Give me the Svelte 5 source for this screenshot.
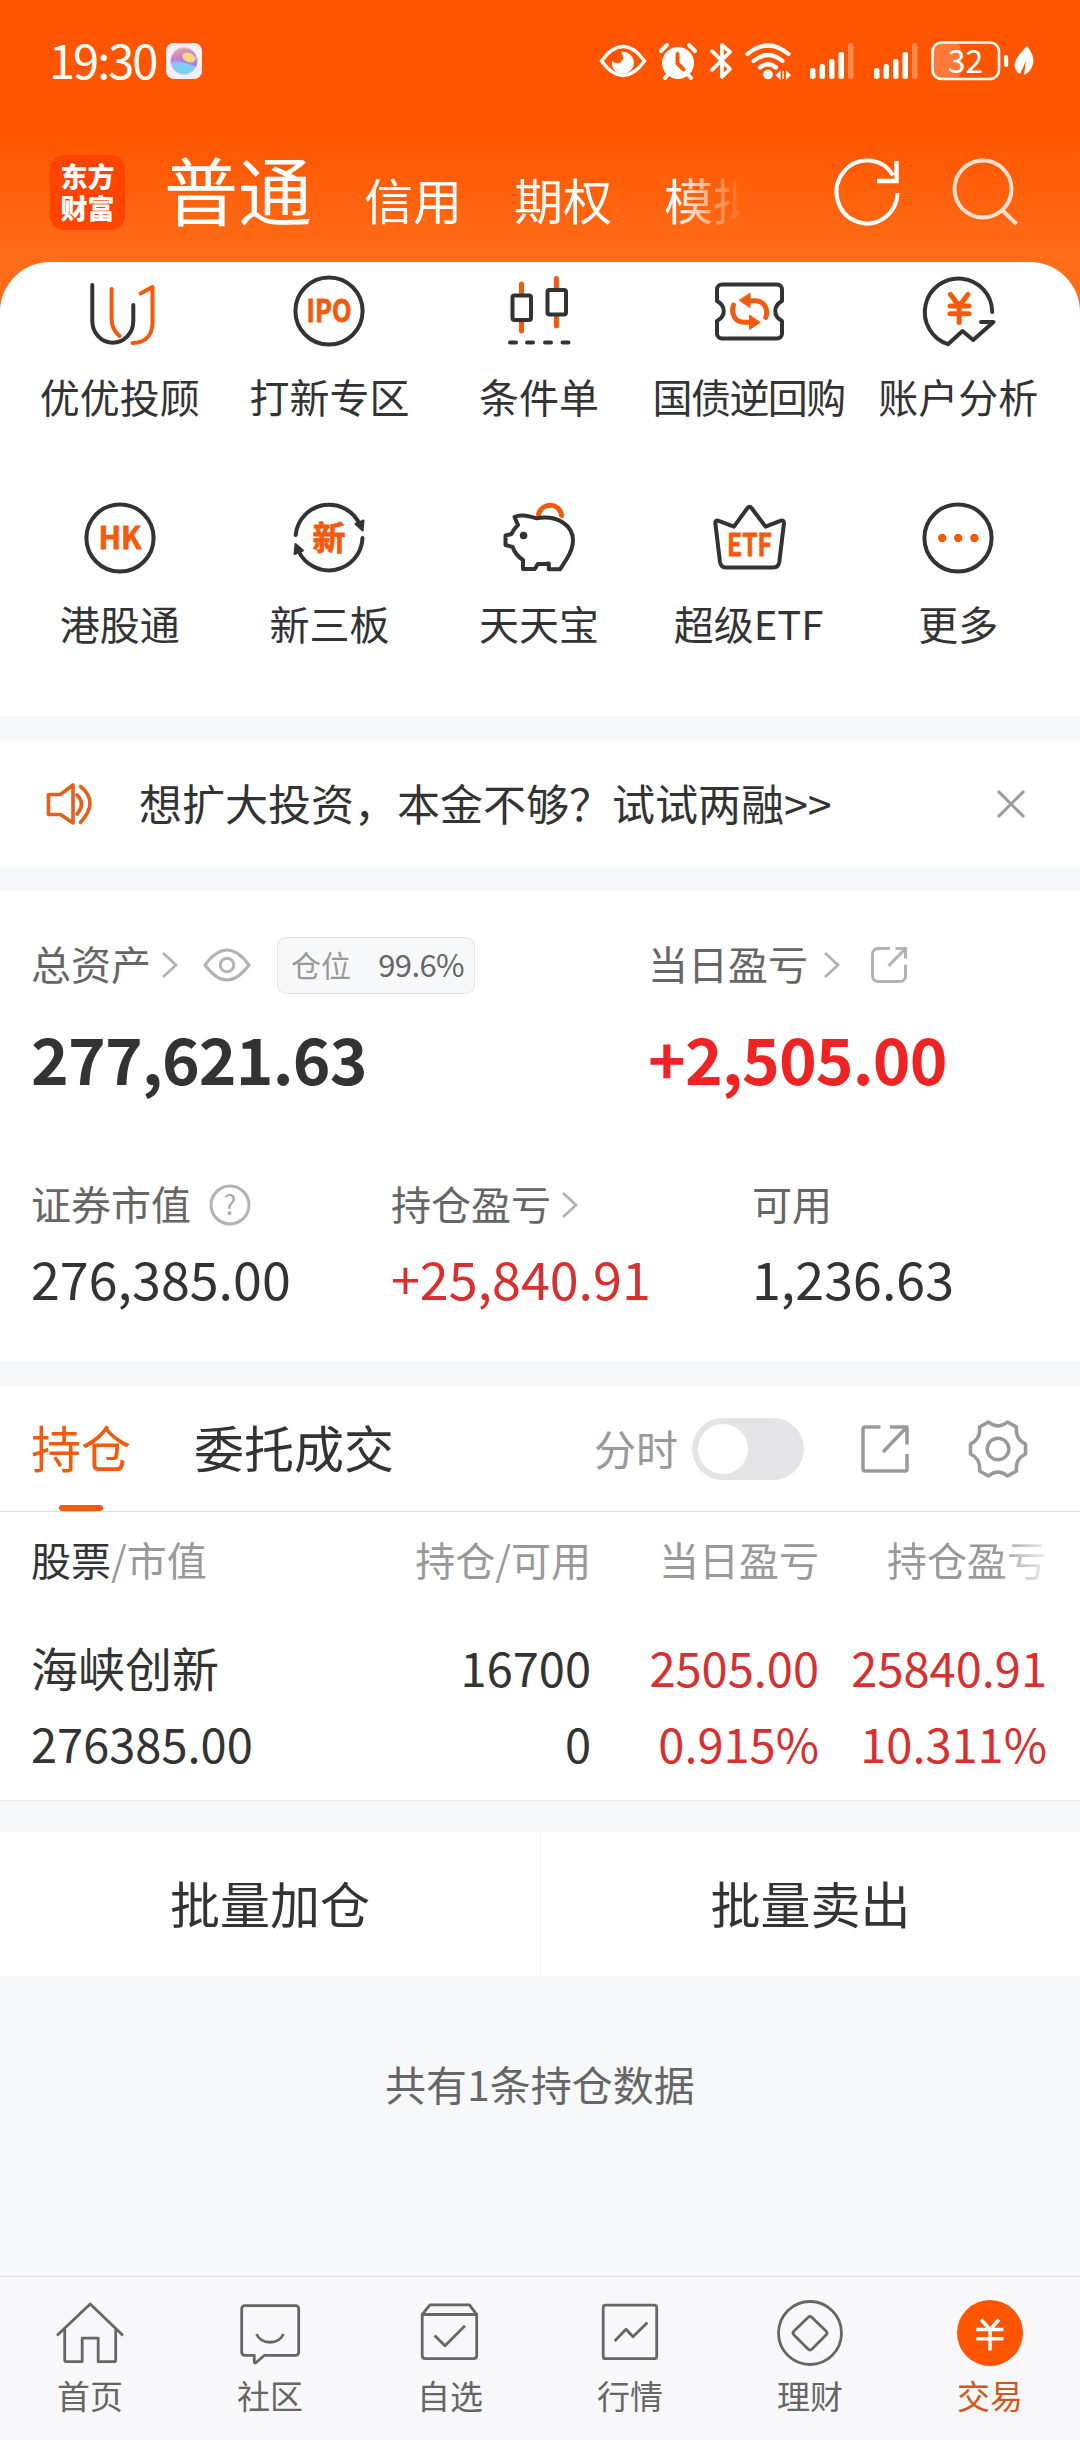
<script>
	const tabs = ['信用', '期权', '模拟'];
	const menu = [
		['advisor', '优优投顾'],
		['ipo', '打新专区'],
		['candles', '条件单'],
		['ticket', '国债逆回购'],
		['analysis', '账户分析'],
		['hk', '港股通'],
		['neeq', '新三板'],
		['pig', '天天宝'],
		['etf', '超级ETF'],
		['more', '更多']
	];
	const nav = [
		['home', '首页'],
		['chat', '社区'],
		['favorites', '自选'],
		['market', '行情'],
		['wealth', '理财'],
		['trade', '交易']
	];
	const positions = [
		{
			name: '海峡创新',
			value: '276385.00',
			amount: '16700',
			available: '0',
			day: '2505.00',
			dayRate: '0.915%',
			total: '25840.91',
			totalRate: '10.311%'
		}
	];
	let intraday = $state(false);
</script>

{#snippet signal()}
	<svg class="signal" viewBox="0 0 45 37" width="45" height="37">
		<g fill="#fff">
			<rect x="0" y="25" width="5.5" height="11" rx="2.5" />
			<rect x="9.5" y="21" width="5.5" height="15" rx="2.5" />
			<rect x="19" y="16" width="5.5" height="20" rx="2.5" />
			<rect x="28.5" y="9" width="5.5" height="27" rx="2.5" />
			<rect x="38" y="0" width="5.5" height="36" rx="2.5" opacity=".3" />
		</g>
	</svg>
{/snippet}

{#snippet chevron()}
	<svg class="chevron" viewBox="0 0 18 28" width="18" height="28">
		<path d="M2 2l13 12L2 26" fill="none" stroke="#b3b3b3" stroke-width="2.8" />
	</svg>
{/snippet}

{#snippet menuIcon(name)}
	<svg class="menu-icon" viewBox="0 0 72 72" width="72" height="72">
		{#if name === 'advisor'}
			<path d="M8.3 10v36a20.5 21.7 0 0 0 41 0V30" />
			<path class="hot" d="M27.6 14v30c0 8 3 13 8 17" />
			<path class="hot" d="M48.5 68c13 0 20-8 20-21V12l-12 6.5" />
		{:else if name === 'ipo'}
			<circle cx="36" cy="36" r="33.6" />
			<text x="36" y="47.4" textLength="45" lengthAdjust="spacingAndGlyphs" font-size="31">IPO</text>
		{:else if name === 'candles'}
			<path class="hot thick" d="M18.5 9v10M18.5 46v10M53.4 3.5v10M53.4 41v10" />
			<rect x="9.5" y="20.5" width="18.5" height="24.5" rx="2" />
			<rect x="44.5" y="15" width="18.5" height="24.5" rx="2" />
			<path d="M7 67.5h6M24 67.5h6M42 67.5h6M59.5 67.5h6" />
		{:else if name === 'ticket'}
			<path d="M9 9.5h55a5 5 0 0 1 5 5v11.500c-9 5-9 15 0 20v12.500a5 5 0 0 1-5 5H9a5 5 0 0 1-5-5V46c9-5 9-15 0-20V14.500a5 5 0 0 1 5-5z" />
			<path class="hot thick" d="M20.5 30c-3 9 2 17 10 17.300h8M52.800 42.500c3-9-2-16.500-10.500-16.800h-7" />
			<path class="solid" d="M37 18.500v14l-10.500-7zM36.500 40.500v14l10.500-7z" />
		{:else if name === 'analysis'}
			<path d="M70.2 37A33.7 33.7 0 1 0 26 69.200L40.500 56l10.700 9L71.500 47H59" />
			<path class="hot" stroke-width="5" d="M28.500 19.500L37.200 31l8.700-11.500M37.200 31v16.500M28 31h19M28 38.800h19" />
		{:else if name === 'hk'}
			<circle cx="36" cy="36" r="33.6" />
			<text x="36" y="47.4" textLength="43" lengthAdjust="spacingAndGlyphs" font-size="31">HK</text>
		{:else if name === 'neeq'}
			<path d="M2.700 33A33.600 33.600 0 0 1 67 23M69.500 36A33.600 33.600 0 0 1 5.500 49" />
			<path class="tip" d="M62.500 22l8-3.500-.8 10zM2.500 42l-1 10 8.500-3.500z" />
			<text x="36" y="48" font-size="33">新</text>
		{:else if name === 'pig'}
			<path class="hot thick" d="M35.500 12.500C39 0 56 0 58.700 13.500" />
			<path d="M11.500 15c6-3 13-1 22 1.200C56 13 70 24 70 38.500c0 8-3 13-6 18L57 67.300H45.800V61.500q-6 .8-11 .5l-3 5H20v-9C14 54 11 49 9.600 45L2.500 43V33.500l6-1.500q2-5 6.500-9z" />
			<circle class="tip" cx="20.6" cy="33.5" r="2.8" />
		{:else if name === 'etf'}
			<path d="M5 18.600l15.900 6L34.500 6q2-2.500 4 0l14 18.600 15.500-6q3-.5 3 2.500L66.300 60q-.8 5.500-6 5.500H13q-5.200 0-6-5.500L2.300 21q0-3 2.700-2.400z" />
			<text x="36.5" y="54.3" textLength="45" lengthAdjust="spacingAndGlyphs" font-size="31">ETF</text>
		{:else}
			<circle cx="36" cy="36" r="33.6" />
			<g class="solid">
				<circle cx="20.2" cy="36" r="2.2" />
				<circle cx="36.2" cy="36" r="2.2" />
				<circle cx="52.4" cy="36" r="2.2" />
			</g>
		{/if}
	</svg>
{/snippet}

{#snippet navIcon(name)}
	<svg class="nav-icon" viewBox="0 0 72 72" width="72" height="72">
		{#if name === 'home'}
			<path d="M3 38.500L36.200 7 69 38.500M10.700 32v30.700q0 2 2 2h15.500V41.200h16v23.500h15.500q2 0 2-2V32" />
		{:else if name === 'chat'}
			<path d="M10.700 8.700h51a3 3 0 0 1 3 3v43.600a3 3 0 0 1-3 3H30.500L21.500 66l-1.200-.5v-7.200h-9.600a3 3 0 0 1-3-3V11.700a3 3 0 0 1 3-3z" />
			<path d="M22.500 37c5 11 22 11 27 0" />
		{:else if name === 'favorites'}
			<path d="M8.200 17.500h54.500v41q0 3.200-3.200 3.200H11.400q-3.200 0-3.200-3.200zM8.200 17.500L16 7.900h39.400l7.300 9.600M20.600 38.500L31 48.800l20-20" />
		{:else if name === 'market'}
			<rect x="9.2" y="8.2" width="53.5" height="53.5" rx="2.5" />
			<path d="M20.700 44L32 32.300l7 7.400 14.400-14.200" />
		{:else if name === 'wealth'}
			<circle cx="36" cy="36" r="31.5" />
			<path d="M34 20.500q2-2 4 0l14 13.500q2 2 0 4l-14 14q-2 2-4 0L20 38q-2-2 0-4z" />
		{:else}
			<circle class="coin" cx="36" cy="36" r="33" />
			<path class="yen" d="M27 22.500l9 10 9-10M36 32.500v21M22.300 32.500h27.200M22.300 41.700h27.200" />
		{/if}
	</svg>
{/snippet}

<main>
	<div class="top">
		<div class="status">
			<span class="clock">19:30</span>
			<svg class="orb" viewBox="0 0 36 36" width="36" height="36">
				<defs>
					<linearGradient id="orb" x1="0" y1="0" x2="0.3" y2="1">
						<stop offset="0" stop-color="#f5b76e" />
						<stop offset=".45" stop-color="#c47be0" />
						<stop offset=".6" stop-color="#8cc8f4" />
						<stop offset="1" stop-color="#72d4f0" />
					</linearGradient>
				</defs>
				<rect width="36" height="36" rx="8" fill="#f4f1f6" />
				<circle cx="18" cy="18" r="13.5" fill="url(#orb)" stroke="#e4cbe6" />
				<path d="M10 18q10 1 20 6 3-8-3-14-10 2-17 8z" fill="#b57be8" />
				<ellipse cx="23" cy="14.5" rx="7" ry="4.5" fill="#f5d77c" transform="rotate(20 23 14)" />
			</svg>
			<div class="indicators">
				<svg class="s-eye" viewBox="0 0 48 34" width="48" height="34">
					<path d="M2.500 17Q13 2.500 24 2.500T45.500 17Q35 31.500 24 31.500T2.500 17z" fill="none" stroke="#fff" stroke-width="3.5" />
					<path d="M22 8a11 11 0 1 1-9 9q5 4 9 1 4-4 0-10z" fill="#fff" />
				</svg>
				<svg class="s-alarm" viewBox="0 0 38 37" width="38" height="37">
					<path d="M6 35l5-6M32 35l-5-6M2 8l6-6M36 8l-6-6" stroke="#fff" stroke-width="4" stroke-linecap="round" />
					<circle cx="19" cy="20" r="16" fill="#fff" />
					<path d="M18.500 11v9.500l6 6" fill="none" stroke="#ff5500" stroke-width="4" stroke-linecap="round" />
				</svg>
				<svg class="s-bt" viewBox="0 0 24 38" width="24" height="38">
					<path d="M3 9l18 18-8 8V3l8 7L3 28" fill="none" stroke="#fff" stroke-width="3.8" stroke-linejoin="round" stroke-linecap="round" />
				</svg>
				<svg class="s-wifi" viewBox="0 0 46 37" width="46" height="37">
					<g fill="none" stroke="#fff" stroke-width="4.2" stroke-linecap="round">
						<path d="M2.500 11q20.500-17 41 0M8.500 18q14.500-12 29 0M15 24.500q8-6.500 16 0" />
					</g>
					<circle cx="23" cy="31.5" r="4.8" fill="#fff" />
					<path d="M30.500 32l5-4.500V37zM46 32l-5-4.500V37zM37.500 28h1.500v8h-1.500z" fill="#fff" />
				</svg>
				{@render signal()}
				{@render signal()}
				<svg class="s-battery" viewBox="0 0 78 40" width="78" height="40">
					<rect x="2" y="2" width="28" height="36" rx="7" fill="#fff" opacity=".22" />
					<rect x="1.5" y="1.5" width="66.5" height="36.5" rx="9" fill="none" stroke="#fff" stroke-width="2.6" />
					<rect x="73" y="14" width="4.2" height="12" rx="2" fill="#fff" />
					<text x="34.5" y="31.5" text-anchor="middle" font-size="32" fill="#fff">32</text>
				</svg>
				<svg class="s-leaf" viewBox="0 0 20 30" width="20" height="30">
					<path d="M13 0q8 10 6 18-2 8-9 11l2-14-6 13Q-1 24 1 16q2-6 12-16z" fill="#fff" />
				</svg>
			</div>
		</div>

		<header>
			<div class="logo"><span>东方</span><span>财富</span></div>
			<nav class="accounts">
				<span class="current">普通</span>
				{#each tabs as tab}
					<span>{tab}</span>
				{/each}
			</nav>
			<svg class="refresh" viewBox="0 0 66 68" width="66" height="68">
				<path d="M62.500 35A30.500 31.500 0 1 1 58 17.500" />
				<path d="M61.500 3v20H42" stroke-width="4.5" />
			</svg>
			<svg class="search" viewBox="0 0 68 68" width="68" height="68">
				<circle cx="31" cy="31" r="28.5" />
				<path d="M50 52l14.500 14" />
			</svg>
		</header>

		<section class="menu">
			{#each menu as [icon, label]}
				<a href="#{icon}" class:long={icon === 'ticket'}>
					{@render menuIcon(icon)}
					<span>{label}</span>
				</a>
			{/each}
		</section>
	</div>

	<section class="notice">
		<svg viewBox="0 0 50 44" width="50" height="44" class="speaker">
			<path d="M2.500 12.500h12L27 3v38L14.500 32.500h-12zM31 13q9 9 0 19M34.500 4.500q19 15 0 36" />
		</svg>
		<p>想扩大投资，本金不够？试试两融&gt;&gt;</p>
		<svg viewBox="0 0 30 30" width="30" height="30" class="close">
			<path d="M2 2l26 26M28 2L2 28" />
		</svg>
	</section>

	<section class="assets">
		<div class="totals">
			<div>
				<div class="label">
					<span class="title">总资产</span>
					{@render chevron()}
					<svg class="eye" viewBox="0 0 48 34" width="48" height="34">
						<path d="M2 17Q13 2 24 2t22 15Q35 32 24 32T2 17z" />
						<circle cx="24" cy="17" r="6.8" />
					</svg>
					<span class="ratio">仓位 <b>99.6%</b></span>
				</div>
				<strong class="num">277,621.63</strong>
			</div>
			<div>
				<div class="label">
					<span class="title">当日盈亏</span>
					<span class="wide">{@render chevron()}</span>
					<svg class="share" viewBox="0 0 38 38" width="38" height="38">
						<path d="M20 2.500H8a5.500 5.500 0 0 0-5.500 5.500v22A5.500 5.500 0 0 0 8 35.500h22a5.500 5.500 0 0 0 5.500-5.500V18.500M25.500 2.500h10v10M35 3L18.500 20" />
					</svg>
				</div>
				<strong class="num rise">+2,505.00</strong>
			</div>
		</div>
		<div class="details">
			<div>
				<div class="label">
					<span class="title">证券市值</span>
					<svg class="help" viewBox="0 0 42 42" width="42" height="42">
						<circle cx="21" cy="21" r="19" />
						<text x="21" y="30.5" text-anchor="middle" font-size="27">?</text>
					</svg>
				</div>
				<div class="num">276,385.00</div>
			</div>
			<div>
				<div class="label">
					<span class="title">持仓盈亏</span>
					{@render chevron()}
				</div>
				<div class="num rise">+25,840.91</div>
			</div>
			<div>
				<div class="label"><span class="title">可用</span></div>
				<div class="num">1,236.63</div>
			</div>
		</div>
	</section>

	<section class="positions">
		<div class="toolbar">
			<span class="tab active">持仓</span>
			<span class="tab">委托成交</span>
			<span class="switch-label">分时</span>
			<button class="switch" class:on={intraday} onclick={() => (intraday = !intraday)} aria-label="分时"></button>
			<svg class="export" viewBox="0 0 48 50" width="48" height="50">
				<path d="M19.500 3H4a2 2 0 0 0-2 2v40a2 2 0 0 0 2 2h40a2 2 0 0 0 2-2V30M29 3h17v17.500M45 4L22 28" />
			</svg>
			<svg class="gear" viewBox="0 0 58 58" width="58" height="58">
				<path d="M19.500 2q9.500 8 19 0l9 5q-1.500 12 9 17v10q-10.500 5-9 17l-9 5q-9.500-8-19 0l-9-5q1.500-12-9-17V24q10.500-5 9-17z" />
				<circle cx="29" cy="29" r="10.8" />
			</svg>
		</div>

		<div class="row head">
			<span><b>股票</b>/市值</span>
			<span>持仓/可用</span>
			<span>当日盈亏</span>
			<span class="fade">持仓盈亏</span>
		</div>
		{#each positions as p}
			<div class="row stock">
				<span class="name">{p.name}</span>
				<span>{p.amount}</span>
				<span class="rise">{p.day}</span>
				<span class="rise">{p.total}</span>
			</div>
			<div class="row stock last">
				<span>{p.value}</span>
				<span>{p.available}</span>
				<span class="rise">{p.dayRate}</span>
				<span class="rise">{p.totalRate}</span>
			</div>
		{/each}
	</section>

	<div class="batch">
		<span>批量加仓</span>
		<span>批量卖出</span>
	</div>

	<p class="count">共有{positions.length}条持仓数据</p>

	<nav class="bottom">
		{#each nav as [icon, label]}
			<a href="#{icon}" class:active={icon === 'trade'}>
				{@render navIcon(icon)}
				<span>{label}</span>
			</a>
		{/each}
	</nav>
</main>

<style>
	:global(body) {
		margin: 0;
		background: #f7f8fa;
	}

	main {
		display: flex;
		flex-direction: column;
		width: 1080px;
		height: 2440px;
		overflow: hidden;
		font-family: 'Noto Sans CJK SC', sans-serif;
		font-weight: 400;
		color: #333;
		background: #f7f8fa;
	}

	svg {
		display: block;
		flex: none;
		overflow: visible;
	}

	a {
		color: inherit;
		text-decoration: none;
	}

	p {
		margin: 0;
	}

	.rise {
		color: #d7302f;
	}

	/* status bar and header */
	.top {
		background: linear-gradient(#ff5500 135px, #ff6d18 255px);
	}

	.status {
		display: flex;
		align-items: center;
		height: 122px;
		box-sizing: border-box;
		padding: 0 46px 0 49px;
		color: #fff;
	}

	.clock {
		width: 117px;
		padding-bottom: 5px;
		font-size: 47px;
		line-height: 60px;
		letter-spacing: -2px;
		white-space: nowrap;
	}

	.indicators {
		display: flex;
		align-items: center;
		margin-left: auto;
	}

	.s-alarm,
	.s-bt,
	.s-wifi,
	.s-battery {
		margin-left: 12px;
	}

	.signal {
		margin-left: 19px;
	}

	.s-leaf {
		margin-left: 5px;
	}

	header {
		display: flex;
		align-items: center;
		height: 140px;
		padding: 0 60px 0 50px;
		color: #fff;
	}

	.logo {
		display: flex;
		flex-direction: column;
		justify-content: center;
		width: 75px;
		height: 75px;
		border-radius: 14px;
		background: #ff4400;
		font-size: 27px;
		font-weight: 900;
		line-height: 32px;
		text-align: center;
	}

	.accounts {
		display: flex;
		align-items: baseline;
		gap: 52px;
		width: 576px;
		margin-left: 39px;
		padding-top: 3px;
		overflow: hidden;
		font-size: 49px;
		line-height: 110px;
		white-space: nowrap;
		-webkit-mask-image: linear-gradient(90deg, #000 510px, transparent 580px);
		mask-image: linear-gradient(90deg, #000 510px, transparent 580px);
	}

	.current {
		font-size: 74px;
	}

	.refresh,
	.search {
		fill: none;
		stroke: #fff;
		stroke-width: 4;
	}

	.refresh {
		margin-left: auto;
	}

	.search {
		margin-left: 51px;
		opacity: 0.8;
	}

	/* shortcuts */
	.menu {
		display: grid;
		grid-template-columns: repeat(5, 1fr);
		grid-auto-rows: 227px;
		box-sizing: border-box;
		height: 454px;
		padding: 13px 17px 0 15px;
		border-radius: 50px 50px 0 0;
		background: #fff;
	}

	.menu a {
		display: flex;
		flex-direction: column;
		align-items: center;
		font-size: 40px;
		line-height: 60px;
		white-space: nowrap;
	}

	.menu span {
		margin-top: 19px;
	}

	.menu .long span {
		letter-spacing: -1.6px;
	}

	.menu-icon {
		fill: none;
		stroke: #333;
		stroke-width: 4;
		stroke-linejoin: round;
		stroke-linecap: round;
	}

	.menu-icon .hot {
		stroke: #f55a0c;
	}

	.menu-icon .thick {
		stroke-width: 5;
	}

	.menu-icon .solid {
		fill: #f55a0c;
		stroke: #f55a0c;
	}

	.menu-icon path.solid {
		stroke-width: 1;
	}

	.menu-icon .tip {
		fill: #333;
		stroke-width: 2;
	}

	.menu-icon text {
		fill: #f55a0c;
		stroke: #f55a0c;
		stroke-width: 0.8;
		font-weight: 700;
		text-anchor: middle;
	}

	/* notice */
	.notice {
		display: flex;
		align-items: center;
		height: 125px;
		margin: 25px 0;
		padding: 0 54px 0 46px;
		background: #fff;
		font-size: 43px;
	}

	.notice p {
		flex: 1;
		margin-left: 43px;
		padding-bottom: 4px;
	}

	.speaker {
		fill: none;
		stroke: #e5601c;
		stroke-width: 3.6;
		stroke-linejoin: round;
		stroke-linecap: round;
	}

	.close {
		stroke: #999;
		stroke-width: 3;
	}

	/* assets */
	.assets {
		box-sizing: border-box;
		height: 470px;
		padding: 44px 0 0 31px;
		background: #fff;
	}

	.totals {
		display: grid;
		grid-template-columns: 617px 1fr;
		height: 240px;
	}

	.details {
		display: grid;
		grid-template-columns: 360px 361px 1fr;
	}

	.label {
		display: flex;
		align-items: center;
		height: 60px;
		font-size: 40px;
		line-height: 60px;
		color: #666;
	}

	.title {
		padding-bottom: 4px;
	}

	.label .chevron {
		margin-left: 10px;
	}

	.wide .chevron {
		margin-left: 15px;
	}

	.eye,
	.share,
	.help {
		fill: none;
		stroke: #b3b3b3;
		stroke-width: 3;
	}

	.eye {
		margin-left: 24px;
	}

	.share {
		margin-left: 29px;
	}

	.help {
		margin-left: 18px;
	}

	.help text {
		fill: #aaa;
		stroke: none;
	}

	.ratio {
		display: flex;
		justify-content: space-between;
		align-items: center;
		box-sizing: border-box;
		width: 198px;
		height: 57px;
		margin-left: 26px;
		padding: 0 10px 3px 13px;
		border: 1px solid #e4e4e6;
		border-radius: 9px;
		background: #f7f8fa;
		font-size: 30px;
		color: #999;
	}

	.ratio b {
		font-size: 31px;
		font-weight: 400;
		letter-spacing: -0.6px;
		color: #666;
	}

	.totals strong {
		display: block;
		margin-top: 22px;
		font-size: 64px;
		font-weight: 700;
		line-height: 80px;
		letter-spacing: -0.8px;
	}

	.totals .rise {
		color: #ee2424;
	}

	.details .num {
		margin-top: 13px;
		font-size: 52px;
		line-height: 60px;
	}

	/* positions */
	.positions {
		box-sizing: border-box;
		height: 415px;
		margin-top: 25px;
		border-bottom: 1px solid #ececee;
		background: #fff;
	}

	.toolbar {
		display: flex;
		align-items: center;
		box-sizing: border-box;
		height: 126px;
		padding: 0 53px 0 31px;
		border-bottom: 1px solid #dedede;
	}

	.tab {
		position: relative;
		margin-right: 63px;
		padding-bottom: 4px;
		font-size: 50px;
		line-height: 121px;
	}

	.tab.active {
		color: #f55a0c;
	}

	.tab.active::after {
		content: '';
		position: absolute;
		left: 28px;
		bottom: 0;
		width: 44px;
		height: 6px;
		border-radius: 3px;
		background: #f55a0c;
	}

	.switch-label {
		margin-left: auto;
		padding-bottom: 3px;
		font-size: 42px;
		color: #999;
	}

	.switch {
		width: 112px;
		height: 62px;
		margin-left: 14px;
		padding: 6px;
		border: 0;
		border-radius: 31px;
		background: #e4e4e6;
	}

	.switch::before {
		content: '';
		display: block;
		width: 50px;
		height: 50px;
		border-radius: 50%;
		background: #fff;
	}

	.switch.on {
		background: #f55a0c;
	}

	.switch.on::before {
		margin-left: auto;
	}

	.export,
	.gear {
		fill: none;
		stroke: #999;
		stroke-width: 3.5;
		stroke-linejoin: round;
	}

	.export {
		margin-left: 57px;
	}

	.gear {
		margin-left: 60px;
	}

	.row {
		display: grid;
		grid-template-columns: 300px 260px 228px 228px;
		padding-left: 31px;
		line-height: 76px;
		text-align: right;
		white-space: nowrap;
	}

	.row > :first-child {
		text-align: left;
	}

	.head {
		padding-top: 9px;
		font-size: 40px;
		color: #999;
	}

	.head b {
		font-weight: 400;
		color: #333;
	}

	.head .fade {
		-webkit-mask-image: linear-gradient(90deg, #000 178px, rgba(0, 0, 0, 0.15) 228px);
		mask-image: linear-gradient(90deg, #000 178px, rgba(0, 0, 0, 0.15) 228px);
	}

	.stock {
		padding-top: 32px;
		font-size: 47px;
	}

	.stock.last {
		padding-top: 0;
	}

	/* batch actions */
	.batch {
		display: grid;
		grid-template-columns: 1fr 1fr;
		height: 144px;
		margin-top: 31px;
		background: #fff;
		font-size: 50px;
		line-height: 140px;
		text-align: center;
	}

	.batch span + span {
		border-left: 1px solid #f2f2f4;
	}

	.count {
		flex: 1;
		padding-top: 77px;
		font-size: 41px;
		line-height: 60px;
		text-align: center;
		color: #666;
	}

	.bottom {
		display: grid;
		grid-template-columns: repeat(6, 1fr);
		box-sizing: border-box;
		height: 164px;
		padding-top: 20px;
		border-top: 1px solid #e0e0e2;
		background: #f8f8fa;
	}

	.bottom a {
		display: flex;
		flex-direction: column;
		align-items: center;
		font-size: 33px;
		line-height: 50px;
		color: #666;
	}

	.bottom a span {
		margin-top: 1px;
	}

	.bottom .active {
		color: #d2571a;
	}

	.nav-icon {
		fill: none;
		stroke: #666;
		stroke-width: 2.8;
		stroke-linejoin: round;
	}

	.nav-icon .coin {
		fill: #ff5500;
		stroke: none;
	}

	.nav-icon .yen {
		stroke: #fff;
		stroke-width: 3.4;
	}
</style>
